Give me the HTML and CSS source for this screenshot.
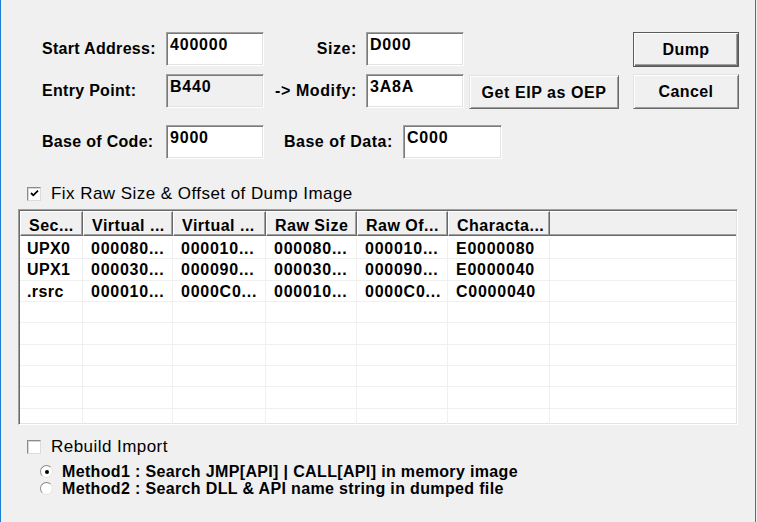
FILE: index.html
```html
<!DOCTYPE html>
<html>
<head>
<meta charset="utf-8">
<link rel="stylesheet" href="styles.css">
</head>
<body>
<div class="window">
  <div class="top">
    <div class="row r1">
      <span class="lbl lbl-left">Start Address:</span>
      <div class="edit">400000</div>
      <span class="lbl lbl-mid">Size:</span>
      <div class="edit">D000</div>
      <div class="btn btn-default dump">Dump</div>
    </div>
    <div class="row r2">
      <span class="lbl lbl-left">Entry Point:</span>
      <div class="edit disabled">B440</div>
      <span class="lbl lbl-mid">-&gt; Modify:</span>
      <div class="edit">3A8A</div>
      <div class="btn eip">Get EIP as OEP</div>
      <div class="btn cancel">Cancel</div>
    </div>
    <div class="row r3">
      <span class="lbl lbl-left">Base of Code:</span>
      <div class="edit">9000</div>
      <span class="lbl lbl-data">Base of Data:</span>
      <div class="edit edit-data">C000</div>
    </div>
  </div>

  <div class="check fix">
    <span class="cb"><svg width="9" height="9" viewBox="0 0 9 9"><path d="M1 4 L3.3 6.3 L8 1.6" fill="none" stroke="#000" stroke-width="1.8"/></svg></span>
    <span class="ctext">Fix Raw Size &amp; Offset of Dump Image</span>
  </div>

  <div class="list">
    <div class="hdr">
      <div class="hc c1">Sec...</div>
      <div class="hc c2">Virtual ...</div>
      <div class="hc c3">Virtual ...</div>
      <div class="hc c4">Raw Size</div>
      <div class="hc c5">Raw Of...</div>
      <div class="hc c6">Characta...</div>
      <div class="hc cx"></div>
    </div>
    <div class="rows">
      <div class="tr"><div class="td c1">UPX0</div><div class="td c2">000080...</div><div class="td c3">000010...</div><div class="td c4">000080...</div><div class="td c5">000010...</div><div class="td c6">E0000080</div><div class="td cx"></div></div>
      <div class="tr"><div class="td c1">UPX1</div><div class="td c2">000030...</div><div class="td c3">000090...</div><div class="td c4">000030...</div><div class="td c5">000090...</div><div class="td c6">E0000040</div><div class="td cx"></div></div>
      <div class="tr"><div class="td c1">.rsrc</div><div class="td c2">000010...</div><div class="td c3">0000C0...</div><div class="td c4">000010...</div><div class="td c5">0000C0...</div><div class="td c6">C0000040</div><div class="td cx"></div></div>
      <div class="tr"><div class="td c1"></div><div class="td c2"></div><div class="td c3"></div><div class="td c4"></div><div class="td c5"></div><div class="td c6"></div><div class="td cx"></div></div>
      <div class="tr"><div class="td c1"></div><div class="td c2"></div><div class="td c3"></div><div class="td c4"></div><div class="td c5"></div><div class="td c6"></div><div class="td cx"></div></div>
      <div class="tr"><div class="td c1"></div><div class="td c2"></div><div class="td c3"></div><div class="td c4"></div><div class="td c5"></div><div class="td c6"></div><div class="td cx"></div></div>
      <div class="tr"><div class="td c1"></div><div class="td c2"></div><div class="td c3"></div><div class="td c4"></div><div class="td c5"></div><div class="td c6"></div><div class="td cx"></div></div>
      <div class="tr"><div class="td c1"></div><div class="td c2"></div><div class="td c3"></div><div class="td c4"></div><div class="td c5"></div><div class="td c6"></div><div class="td cx"></div></div>
      <div class="tr"><div class="td c1"></div><div class="td c2"></div><div class="td c3"></div><div class="td c4"></div><div class="td c5"></div><div class="td c6"></div><div class="td cx"></div></div>
    </div>
  </div>

  <div class="check rebuild">
    <span class="cb"></span>
    <span class="ctext">Rebuild Import</span>
  </div>

  <div class="radio m1">
    <span class="rb"><span class="dot"></span></span>
    <span class="rtext">Method1 : Search JMP[API] | CALL[API] in memory image</span>
  </div>
  <div class="radio m2">
    <span class="rb"></span>
    <span class="rtext">Method2 : Search DLL &amp; API name string in dumped file</span>
  </div>
</div>
</body>
</html>
```

FILE: styles.css
```css
html, body {
  margin: 0;
  padding: 0;
  background: #f0f0f0;
}

body {
  width: 757px;
  height: 522px;
  overflow: hidden;
  font-family: "Liberation Sans", Arial, sans-serif;
  font-size: 16px;
  color: #000;
}

.window {
  box-sizing: border-box;
  width: 756px;
  height: 522px;
  border-left: 1px solid #1a7fd4;
  border-right: 1px solid #1a7fd4;
  background: #f0f0f0;
  display: flex;
  flex-direction: column;
  align-items: flex-start;
}

/* ---------- top form ---------- */
.top {
  padding-top: 32px;
  margin-left: 41px;
  display: flex;
  flex-direction: column;
}

.row {
  display: flex;
  align-items: flex-start;
}

.r1 { height: 35px; }
.r2 { height: 35px; margin-top: 7px; }
.r3 { height: 34px; margin-top: 16px; }

.lbl {
  font-weight: bold;
  letter-spacing: 0.3px;
  line-height: 34px;
  height: 34px;
  white-space: nowrap;
}

.lbl-left { width: 124px; }

.lbl-mid {
  width: 93px;
  margin-right: 9px;
  text-align: right;
  letter-spacing: 0.6px;
}

.lbl-data {
  width: 114px;
  margin-left: 20px;
  margin-right: 5px;
  letter-spacing: 0.5px;
}

.edit {
  box-sizing: border-box;
  width: 98px;
  height: 34px;
  background: #fff;
  border: 1px solid;
  border-color: #a0a0a0 #fff #fff #a0a0a0;
  box-shadow: inset 1px 1px 0 #7a7a7a, inset -1px -1px 0 #e3e3e3;
  padding: 3px 0 0 3px;
  font-weight: bold;
  letter-spacing: 0.8px;
  line-height: 18px;
}

.edit.disabled { background: #f0f0f0; }
.edit-data { width: 99px; }

.btn {
  box-sizing: border-box;
  height: 35px;
  display: flex;
  align-items: center;
  justify-content: center;
  background: #f0f0f0;
  border: 1px solid;
  border-color: #e3e3e3 #696969 #696969 #e3e3e3;
  box-shadow: inset 1px 1px 0 #fff, inset -1px -1px 0 #a0a0a0;
  font-weight: bold;
  letter-spacing: 0.4px;
  padding-top: 1px;
}

.btn-default {
  border-color: #5a5a5a;
  box-shadow: inset 1px 1px 0 #fff, inset -1px -1px 0 #696969, inset -2px -2px 0 #a0a0a0;
}

.dump { width: 106px; margin-left: 169px; }
.eip { width: 150px; height: 34px; margin-left: 5px; margin-top: 1px; letter-spacing: 0.55px; }
.cancel { width: 106px; margin-left: 14px; }

/* ---------- checkboxes ---------- */
.check {
  display: flex;
  align-items: center;
  height: 19px;
  margin-left: 26px;
}

.fix { margin-top: 25px; }
.rebuild { margin-top: 12px; }

.cb {
  box-sizing: border-box;
  width: 14px;
  height: 14px;
  margin-right: 10px;
  background: #fff;
  border: 1px solid;
  border-color: #8c8c8c #dcdcdc #dcdcdc #8c8c8c;
  box-shadow: inset 1px 1px 0 #d6d6d6;
  display: flex;
  align-items: center;
  justify-content: center;
}

.cb svg { display: block; }

.ctext {
  font-size: 17px;
  line-height: 19px;
  letter-spacing: 0.45px;
  white-space: nowrap;
}

/* ---------- list view ---------- */
.list {
  box-sizing: border-box;
  margin-top: 6px;
  margin-left: 17px;
  width: 720px;
  height: 216px;
  border: 1px solid;
  border-color: #a0a0a0 #fff #fff #a0a0a0;
  box-shadow: inset 1px 1px 0 #696969, inset -1px -1px 0 #e3e3e3;
  padding: 1px;
  background: #fff;
  overflow: hidden;
  display: flex;
  flex-direction: column;
}

.hdr {
  display: flex;
  height: 25px;
  flex: none;
  background: #f0f0f0;
}

.hc {
  box-sizing: border-box;
  height: 25px;
  border-top: 1px solid #fff;
  border-left: 1px solid #fff;
  border-right: 1px solid #696969;
  border-bottom: 1px solid #696969;
  box-shadow: inset -1px -1px 0 #a0a0a0;
  padding: 5px 0 0 8px;
  font-weight: bold;
  letter-spacing: 0.5px;
  line-height: 18px;
  white-space: nowrap;
  overflow: hidden;
}

.hc.cx {
  flex: 1;
  border-right: none;
  border-left: none;
  box-shadow: inset 0 -1px 0 #a0a0a0;
}

.c1 { width: 63px; flex: none; }
.c2 { width: 90px; flex: none; }
.c3 { width: 93px; flex: none; }
.c4 { width: 91px; flex: none; }
.c5 { width: 91px; flex: none; }
.c6 { width: 102px; flex: none; }
.cx { flex: 1; }

.rows {
  padding-top: 2px;
  display: flex;
  flex-direction: column;
}

.tr {
  display: flex;
  height: 21.333px;
  flex: none;
  box-sizing: border-box;
  border-bottom: 1px solid #f0f0f0;
}

.td {
  box-sizing: border-box;
  border-right: 1px solid #f0f0f0;
  padding: 2px 0 0 8px;
  font-weight: bold;
  letter-spacing: 0.75px;
  line-height: 18px;
  white-space: nowrap;
  overflow: hidden;
}

.td.c1 { padding-left: 7px; letter-spacing: 0.4px; }
.td.cx { border-right: none; }

/* ---------- radios ---------- */
.radio {
  display: flex;
  align-items: center;
  height: 17px;
  margin-left: 39px;
}

.m1 { margin-top: 7px; }

.rb {
  box-sizing: border-box;
  width: 13px;
  height: 13px;
  margin-right: 9px;
  border-radius: 50%;
  background: #fff;
  border: 1px solid;
  border-color: #8c8c8c #e3e3e3 #e3e3e3 #8c8c8c;
  display: flex;
  align-items: center;
  justify-content: center;
}

.dot {
  width: 4px;
  height: 4px;
  border-radius: 50%;
  background: #000;
}

.rtext {
  font-weight: bold;
  line-height: 17px;
  letter-spacing: 0.35px;
  white-space: nowrap;
}
```
